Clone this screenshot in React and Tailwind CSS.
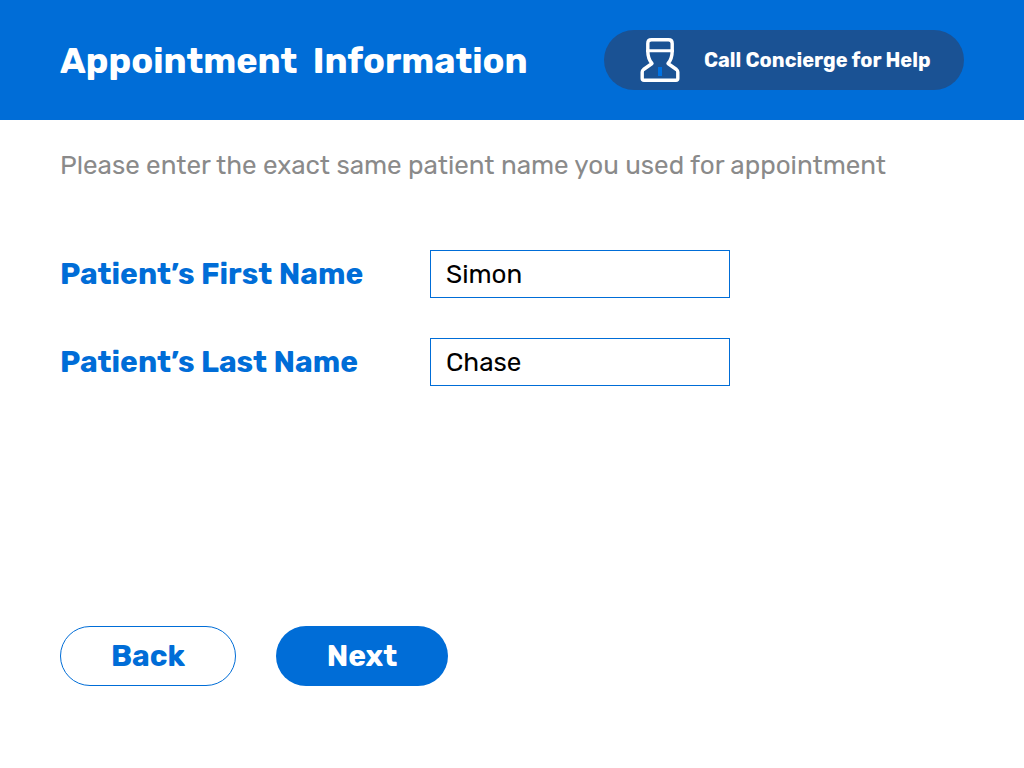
const font = "font-['Rubik','Inter','Roboto',sans-serif]";

function ConciergeIcon() {
  return (
    <svg className="h-11 w-10 shrink-0" viewBox="0 0 40 44" fill="none" stroke="white" strokeWidth="3.4" strokeLinejoin="round" strokeLinecap="round" aria-hidden="true">
      <path d="M7.800 13V5.500Q7.800 1.800 11.500 1.800H28.500Q32.200 1.800 32.200 5.500V13" />
      <path d="M8 12.800H32" strokeWidth="3" />
      <path d="M7.800 13C7.800 19 8.800 22 12 25.500L3.500 31.500Q2.200 32.500 2.200 34V40.500Q2.200 42.200 4 42.200H36Q37.800 42.200 37.800 40.500V34Q37.800 32.500 36.500 31.500L28 25.500C31.200 22 32.200 19 32.200 13" />
      <rect x="18" y="29" width="4" height="9" fill="#0072e3" stroke="none" />
    </svg>
  );
}

function NameField({ id, label, value }) {
  return (
    <div className="flex items-center">
      <label htmlFor={id} className="w-[370px] shrink-0 whitespace-nowrap text-[30px] leading-9 font-bold text-[#006dd7]">{label}</label>
      <input id={id} type="text" defaultValue={value} className="h-12 w-full max-w-[300px] border border-[#006dd7] bg-white px-[15px] text-[26px] text-black" />
    </div>
  );
}

export default function App() {
  return (
    <div className={`min-h-screen bg-white ${font}`}>
      <header className="flex h-[120px] items-center justify-between bg-[#006dd7] px-[60px]">
        <h1 className="pt-0.5 whitespace-pre text-[36px] font-bold text-white">Appointment  Information</h1>
        <button type="button" className="flex h-[60px] w-[360px] shrink-0 items-center gap-6 rounded-full bg-[#1a5294] pl-9 text-[20px] font-bold whitespace-nowrap text-white">
          <ConciergeIcon />
          Call Concierge for Help
        </button>
      </header>
      <main className="px-[60px] pt-7">
        <p className="text-[26px] leading-9 text-[#8a8a8a]">Please enter the exact same patient name you used for appointment</p>
        <form onSubmit={(e) => e.preventDefault()}>
          <div className="flex flex-col gap-10 pt-[66px]">
            <NameField id="first-name" label="Patient’s First Name" value="Simon" />
            <NameField id="last-name" label="Patient’s Last Name" value="Chase" />
          </div>
          <div className="flex gap-10 pt-60">
            <button type="button" className="h-[60px] w-[176px] rounded-full border border-[#006dd7] bg-white text-[30px] font-bold text-[#006dd7]">Back</button>
            <button type="submit" className="h-[60px] w-[172px] rounded-full bg-[#006dd7] text-[30px] font-bold text-white">Next</button>
          </div>
        </form>
      </main>
    </div>
  );
}
